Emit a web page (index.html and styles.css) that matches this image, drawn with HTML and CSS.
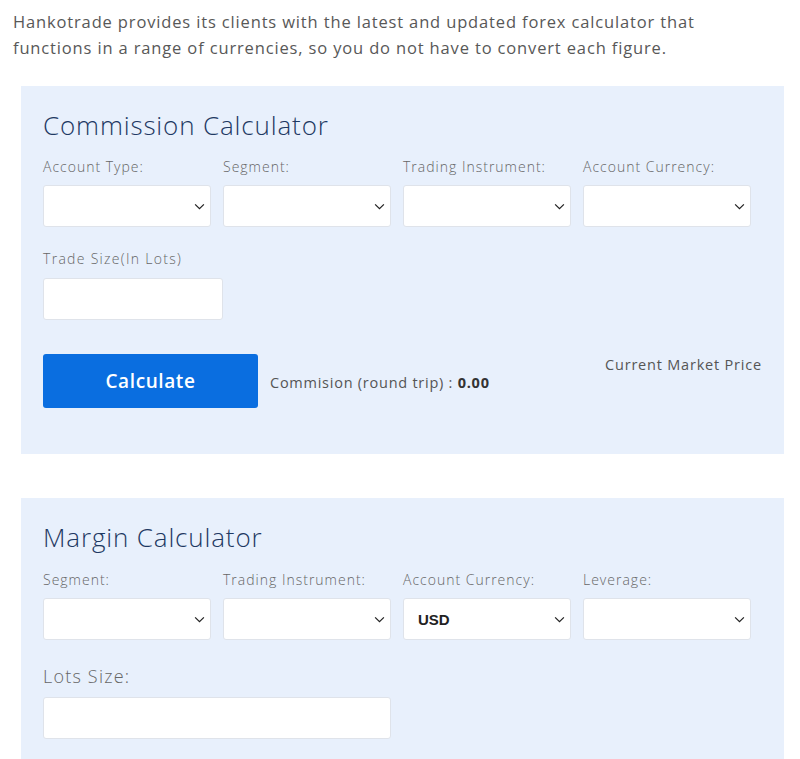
FILE: index.html
```html
<!DOCTYPE html>
<html lang="en">

<head>
    <meta charset="UTF-8">
    <meta name="viewport" content="width=device-width, initial-scale=1.0">
    <title>Forex Calculators</title>
    <link rel="stylesheet" href="styles.css">
</head>

<body>
    <p class="intro">Hankotrade provides its clients with the latest and updated forex calculator that functions in a range of currencies, so you do not have to convert each figure.</p>

    <!-- Commission calculator -->
    <section class="calc calc-commission">
        <h2>Commission Calculator</h2>
        <div class="row">
            <div class="field">
                <label>Account Type:</label>
                <div class="select"><select></select><svg viewBox="0 0 12 8"><path d="M1 1.5l5 5 5-5"/></svg></div>
            </div>
            <div class="field">
                <label>Segment:</label>
                <div class="select"><select></select><svg viewBox="0 0 12 8"><path d="M1 1.5l5 5 5-5"/></svg></div>
            </div>
            <div class="field">
                <label>Trading Instrument:</label>
                <div class="select"><select></select><svg viewBox="0 0 12 8"><path d="M1 1.5l5 5 5-5"/></svg></div>
            </div>
            <div class="field">
                <label>Account Currency:</label>
                <div class="select"><select></select><svg viewBox="0 0 12 8"><path d="M1 1.5l5 5 5-5"/></svg></div>
            </div>
        </div>
        <div class="field trade-size">
            <label>Trade Size(In Lots)</label>
            <input type="text">
        </div>
        <div class="result-row">
            <button class="btn-calc">Calculate</button>
            <span class="result">Commision (round trip) : <b>0.00</b></span>
            <span class="market">Current Market Price</span>
        </div>
    </section>

    <!-- Margin calculator -->
    <section class="calc calc-margin">
        <h2>Margin Calculator</h2>
        <div class="row">
            <div class="field">
                <label>Segment:</label>
                <div class="select"><select></select><svg viewBox="0 0 12 8"><path d="M1 1.5l5 5 5-5"/></svg></div>
            </div>
            <div class="field">
                <label>Trading Instrument:</label>
                <div class="select"><select></select><svg viewBox="0 0 12 8"><path d="M1 1.5l5 5 5-5"/></svg></div>
            </div>
            <div class="field">
                <label>Account Currency:</label>
                <div class="select"><select><option>USD</option></select><svg viewBox="0 0 12 8"><path d="M1 1.5l5 5 5-5"/></svg></div>
            </div>
            <div class="field">
                <label>Leverage:</label>
                <div class="select"><select></select><svg viewBox="0 0 12 8"><path d="M1 1.5l5 5 5-5"/></svg></div>
            </div>
        </div>
        <div class="field lots-size">
            <label>Lots Size:</label>
            <input type="text">
        </div>
    </section>
</body>

</html>
```

FILE: styles.css
```css
body {
    margin: 0;
    padding: 0 16px 0 21px;
    font-family: "Open Sans", Lato, sans-serif;
    color: #555;
    background: #fff;
}

.intro {
    margin: 9px 0 0 -8px;
    font-size: 16.5px;
    line-height: 26px;
    letter-spacing: 0.85px;
    color: #585858;
    max-width: 700px;
}

.calc {
    background: #e8f0fc;
    padding: 22px 33px 46px 22px;
    margin-top: 25px;
}

.calc-margin {
    margin-top: 44px;
    padding-bottom: 30px;
}

.calc h2 {
    margin: 0 0 16px;
    font-size: 26px;
    font-weight: 300;
    color: #1e3963;
    line-height: 34px;
    letter-spacing: 0.85px;
}

.calc-margin h2 {
    margin-bottom: 17px;
}

.row {
    display: grid;
    grid-template-columns: repeat(4, 168px);
    gap: 12px;
}

.field label {
    display: block;
    font-size: 14px;
    color: #666;
    font-weight: 300;
    margin-bottom: 10px;
    line-height: 17px;
    letter-spacing: 1px;
}

.select {
    position: relative;
    height: 42px;
}

.select select {
    appearance: none;
    -webkit-appearance: none;
    width: 100%;
    height: 42px;
    border: 1px solid #dfe3ea;
    border-radius: 3px;
    background: #fff;
    padding: 0 14px;
    font-family: "Liberation Sans", Arial, sans-serif;
    font-size: 15px;
    font-weight: bold;
    color: #222;
}

.select svg {
    position: absolute;
    right: 6px;
    top: 18px;
    width: 11px;
    height: 7px;
    fill: none;
    stroke: #222;
    stroke-width: 1.4;
    pointer-events: none;
}

.field input {
    display: block;
    height: 42px;
    border: 1px solid #dfe3ea;
    border-radius: 3px;
    background: #fff;
    box-sizing: border-box;
}

.trade-size {
    margin-top: 23px;
}

.trade-size label {
    margin-bottom: 11px;
    letter-spacing: 1.3px;
}

.trade-size input {
    width: 180px;
}

.result-row {
    display: flex;
    align-items: center;
    margin-top: 34px;
}

.btn-calc {
    width: 215px;
    height: 54px;
    border: none;
    border-radius: 3px;
    background: #0a6ee0;
    color: #fff;
    font-family: "Open Sans", sans-serif;
    font-size: 19px;
    font-weight: 600;
    letter-spacing: 0.6px;
    cursor: pointer;
}

.result {
    margin-left: 12px;
    margin-top: 2px;
    font-size: 14.5px;
    letter-spacing: 0.75px;
    color: #555;
}

.result b {
    color: #333;
    font-weight: 700;
}

.market {
    margin-left: auto;
    margin-right: -11px;
    align-self: flex-start;
    margin-top: 1px;
    font-size: 14.5px;
    letter-spacing: 0.8px;
    color: #555;
}

.lots-size {
    margin-top: 26px;
}

.lots-size label {
    font-size: 18px;
    line-height: 20px;
    margin-bottom: 11px;
    letter-spacing: 1.2px;
}

.lots-size input {
    width: 348px;
}
```
